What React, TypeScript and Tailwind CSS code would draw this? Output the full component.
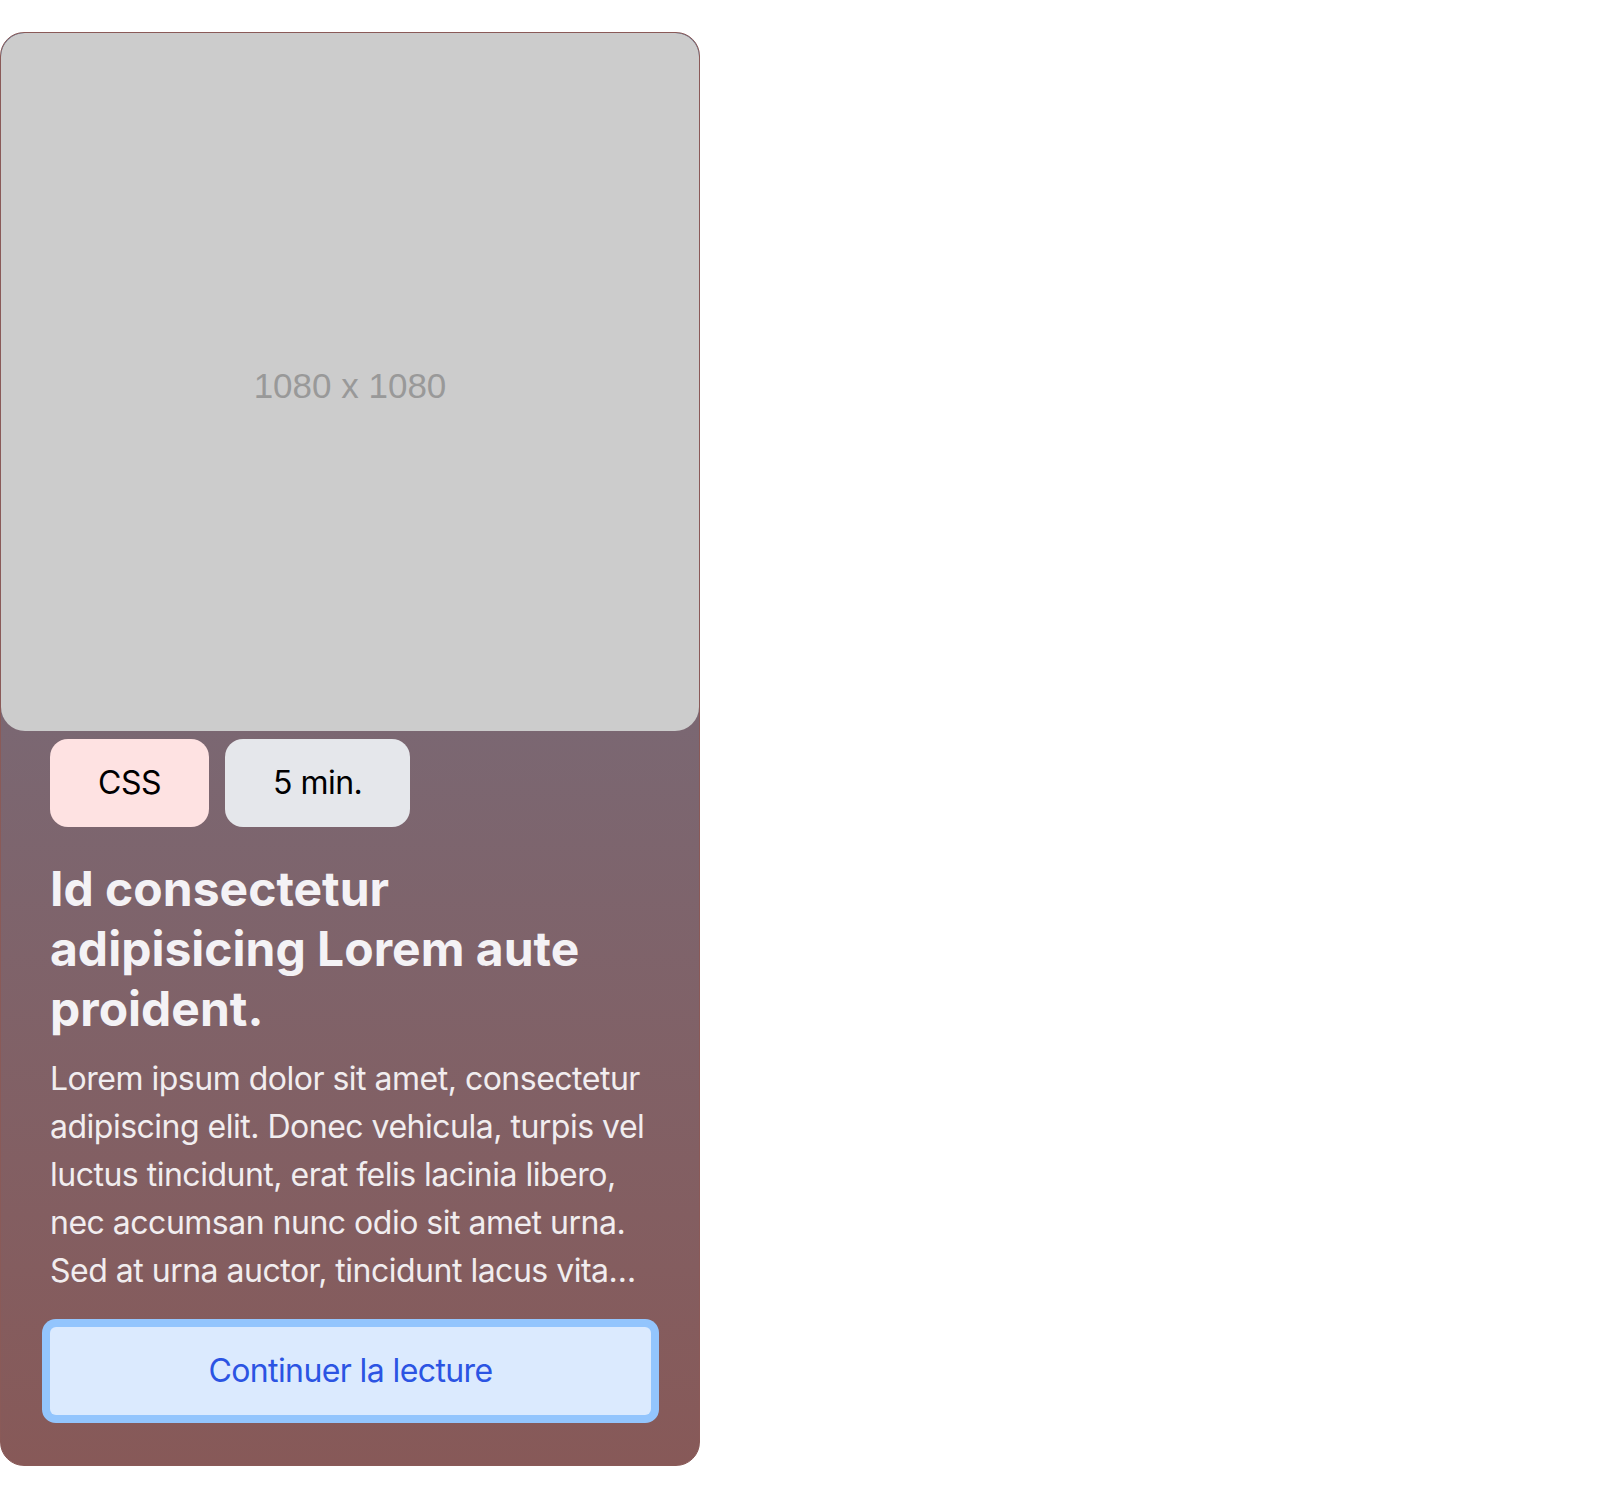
import React from 'react';

const tags = [
  { label: 'CSS', cls: 'bg-[#fee2e2]' },
  { label: '5 min.', cls: 'bg-[#e5e7eb]' },
];

export default function App() {
  return (
    <div className="min-h-screen bg-white pt-8" style={{ fontFamily: 'Inter, "Noto Sans", sans-serif' }}>
      <article className="w-[700px] overflow-hidden rounded-3xl border border-[#8a5a58] bg-gradient-to-b from-[#6c738a] to-[#875958]">
        <div className="flex aspect-square w-full items-center justify-center rounded-3xl bg-[#cccccc] pt-2">
          <span className="text-[35px] text-[#999999]" style={{ fontFamily: '"Liberation Sans", Arial, sans-serif' }}>1080 x 1080</span>
        </div>

        <div className="flex flex-col pl-[49px] pr-12 pb-[50px]">
          <div className="mt-2 flex gap-4">
            {tags.map(t => (
              <span key={t.label} className={`rounded-[18px] px-12 py-5 text-[32px] leading-[48px] tracking-[-0.5px] text-black ${t.cls}`}>{t.label}</span>
            ))}
          </div>

          <h2 className="mt-8 text-[48px] font-bold leading-[60px] text-[#f4f2f5]">
            Id consectetur adipisicing Lorem aute proident.
          </h2>

          <p className="mt-4 line-clamp-5 text-[32px] leading-[48px] tracking-[-0.5px] text-[#f1edef]">
            Lorem ipsum dolor sit amet, consectetur adipiscing elit. Donec vehicula, turpis vel luctus tincidunt, erat felis lacinia libero, nec accumsan nunc odio sit amet urna. Sed at urna auctor, tincidunt lacus vita…
          </p>

          <button className="mt-8 w-full rounded-md bg-[#dbeafe] py-5 text-[32px] leading-[48px] tracking-[-0.6px] text-[#2b54e3] ring-8 ring-[#93c5fd]">
            Continuer la lecture
          </button>
        </div>
      </article>
    </div>
  );
}
